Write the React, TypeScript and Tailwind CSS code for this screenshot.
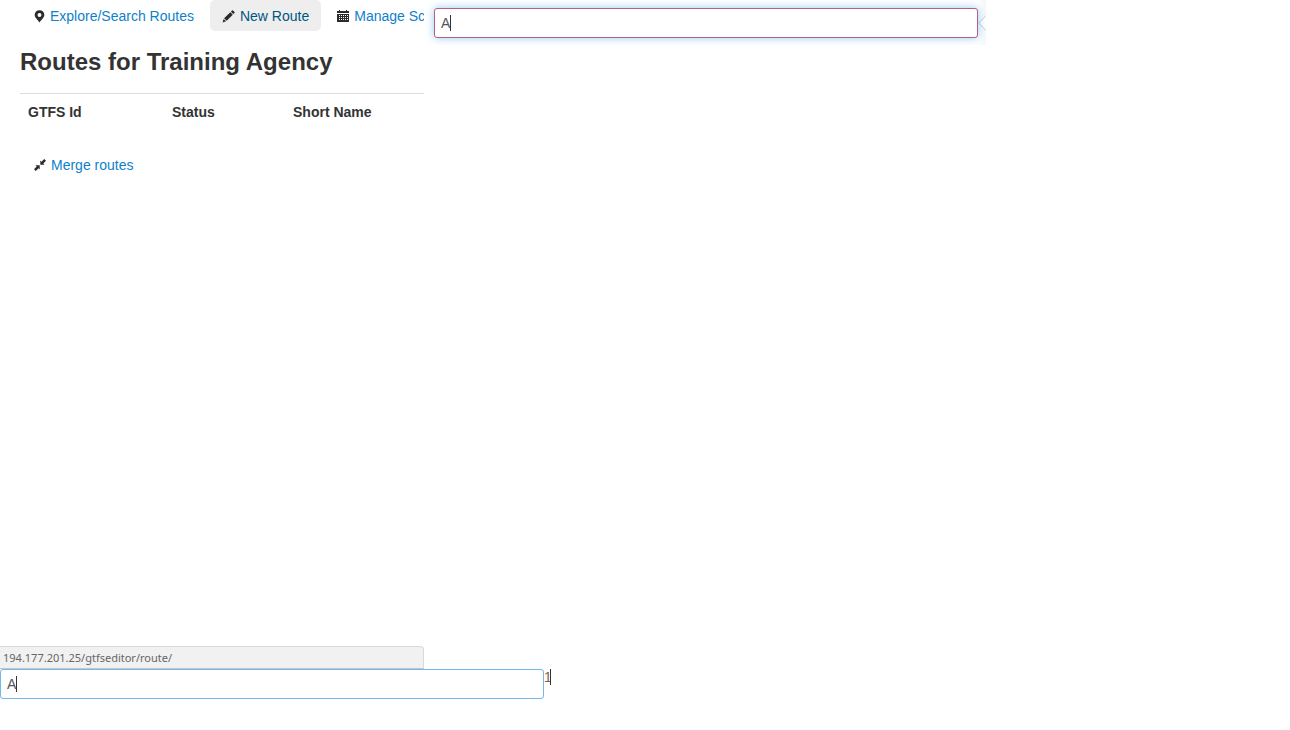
import { useState } from "react";
import type { ReactNode } from "react";

function PinIcon() {
  return (
    <svg viewBox="0 0 11 13" className="h-[13px] w-[11px] shrink-0" fill="#2b2b2b" aria-hidden="true">
      <path fillRule="evenodd" d="M5.5.3C2.700.3.700 2.300.700 4.900c0 2.800 3.200 4.600 4.800 7.700 1.600-3.100 4.800-4.900 4.800-7.700C10.300 2.300 8.300.3 5.500.3Zm0 2.700a2 2 0 1 1 0 4 2 2 0 0 1 0-4Z" />
    </svg>
  );
}

function PencilIcon() {
  return (
    <svg viewBox="0 0 13 13" className="size-[13px] shrink-0" fill="#2b2b2b" aria-hidden="true">
      <path d="M.5 12.500 1.700 8.900 4.100 11.300ZM2.100 8.300 8.300 2.200 10.800 4.700 4.700 10.800ZM8.900 1.700 10.100.5Q10.600.1 11.100.5L12.500 1.900Q12.900 2.400 12.500 2.900L11.300 4.100Z" />
    </svg>
  );
}

function CalendarIcon() {
  return (
    <svg viewBox="0 0 12 12" className="size-3 shrink-0" fill="#2b2b2b" shapeRendering="crispEdges" aria-hidden="true">
      <path d="M2 0h1v1h6V0h1v1h2v2H0V1h2Z" />
      <path fillRule="evenodd" d="M0 4h12v8H0ZM2 5v1h1V5ZM4 5v1h1V5ZM6 5v1h1V5ZM8 5v1h1V5ZM10 5v1h1V5ZM2 7v1h1V7ZM4 7v1h1V7ZM6 7v1h1V7ZM8 7v1h1V7ZM10 7v1h1V7ZM2 9v1h1V9ZM4 9v1h1V9ZM6 9v1h1V9ZM8 9v1h1V9ZM10 9v1h1V9Z" />
    </svg>
  );
}

function MergeIcon() {
  return (
    <svg viewBox="0 0 12 12" className="size-3 shrink-0" fill="#2b2b2b" aria-hidden="true">
      <path d="M6.300 1.500v4.200h4.200L9.300 4.500 12 1.800 10.200 0 7.500 2.700ZM5.700 10.500v-4.200h-4.200l1.200 1.200L0 10.200 1.800 12l2.700-2.700Z" />
    </svg>
  );
}

function NavLink({ icon, active, children }: { icon: ReactNode; active?: boolean; children: ReactNode }) {
  return (
    <a
      href="#"
      className={
        active
          ? "flex h-[31px] shrink-0 items-center gap-[5px] rounded-[5px] bg-[#eeeeee] px-3 pt-px text-[#005580]"
          : "flex h-[31px] shrink-0 items-center gap-[5px] px-3 pt-px text-[#0f7fc9]"
      }
    >
      {icon}
      <span className="whitespace-nowrap">{children}</span>
    </a>
  );
}

function TextField({ label, className }: { label: string; className: string }) {
  const [value, setValue] = useState("A");
  return (
    <div className="relative w-full max-w-[544px]">
      <input
        aria-label={label}
        value={value}
        onChange={(e) => setValue(e.target.value)}
        className={`block h-[30px] w-full rounded-[3px] border bg-white px-1.5 text-[14px] text-[#555555] outline-none ${className}`}
      />
      <span className="absolute left-4 top-[7px] h-4 w-px bg-[#333333]" />
    </div>
  );
}

export default function App() {
  return (
    <div className="min-h-screen bg-white font-['Liberation_Sans',Arial,sans-serif] text-[14px] text-[#333333]">
      <div className="flex items-start">
        <main className="flex min-h-[669px] w-[424px] shrink-0 flex-col">
          <div className="grow pl-5">
            <nav className="flex gap-1 overflow-hidden pl-0.5">
              <NavLink icon={<PinIcon />}>Explore/Search Routes</NavLink>
              <NavLink icon={<PencilIcon />} active>New Route</NavLink>
              <NavLink icon={<CalendarIcon />}>Manage Sc</NavLink>
            </nav>
            <h1 className="mt-4 text-[24px] leading-[30px] font-bold">Routes for Training Agency</h1>
            <table className="mt-4 w-full table-fixed border-t border-[#dddddd] text-left text-[14px]">
              <thead>
                <tr className="h-[38px]">
                  <th className="w-36 pl-2">GTFS Id</th>
                  <th className="w-[121px] pl-2">Status</th>
                  <th className="pl-2">Short Name</th>
                </tr>
              </thead>
            </table>
            <a href="#" className="mt-[18px] flex h-[31px] w-fit items-center gap-[5px] px-3.5 text-[#0f7fc9]">
              <MergeIcon />
              <span>Merge routes</span>
            </a>
          </div>
          <div className="h-[23px] rounded-tr-[4px] border border-l-0 border-[#d9d9d9] border-b-[#c4c4c4] bg-[#f1f1f1] pl-[3px] font-['Noto_Sans','Open_Sans',sans-serif] text-[11px] leading-[22px] text-[#666666]">
            194.177.201.25/gtfseditor/route/
          </div>
        </main>
        <section className="flex h-[45px] w-[562px] items-center overflow-hidden pl-2.5">
          <TextField label="Route name" className="border-[#b5607c] shadow-[0_0_8px_rgba(82,168,236,0.6)]" />
          <div className="flex h-full w-2 shrink-0 items-center bg-linear-to-r from-white/0 to-[#f7f7f7]">
            <svg viewBox="0 0 8 16" className="h-4 w-2" aria-hidden="true">
              <path d="M8 0 0.700 8 8 16Z" fill="#fff" />
              <path d="M8 0.500 0.700 8 8 15.500" fill="none" stroke="#c4cbd1" />
            </svg>
          </div>
        </section>
      </div>
      <div className="flex items-start">
        <TextField label="Value" className="border-[#74b9ec]" />
        <div className="flex h-4 items-center">
          <input aria-label="Digit" defaultValue="1" className="h-4 w-1.5 overflow-hidden text-[14px] text-[#8a5a4a] outline-none" />
          <span className="h-4 w-px bg-[#333333]" />
        </div>
      </div>
    </div>
  );
}
